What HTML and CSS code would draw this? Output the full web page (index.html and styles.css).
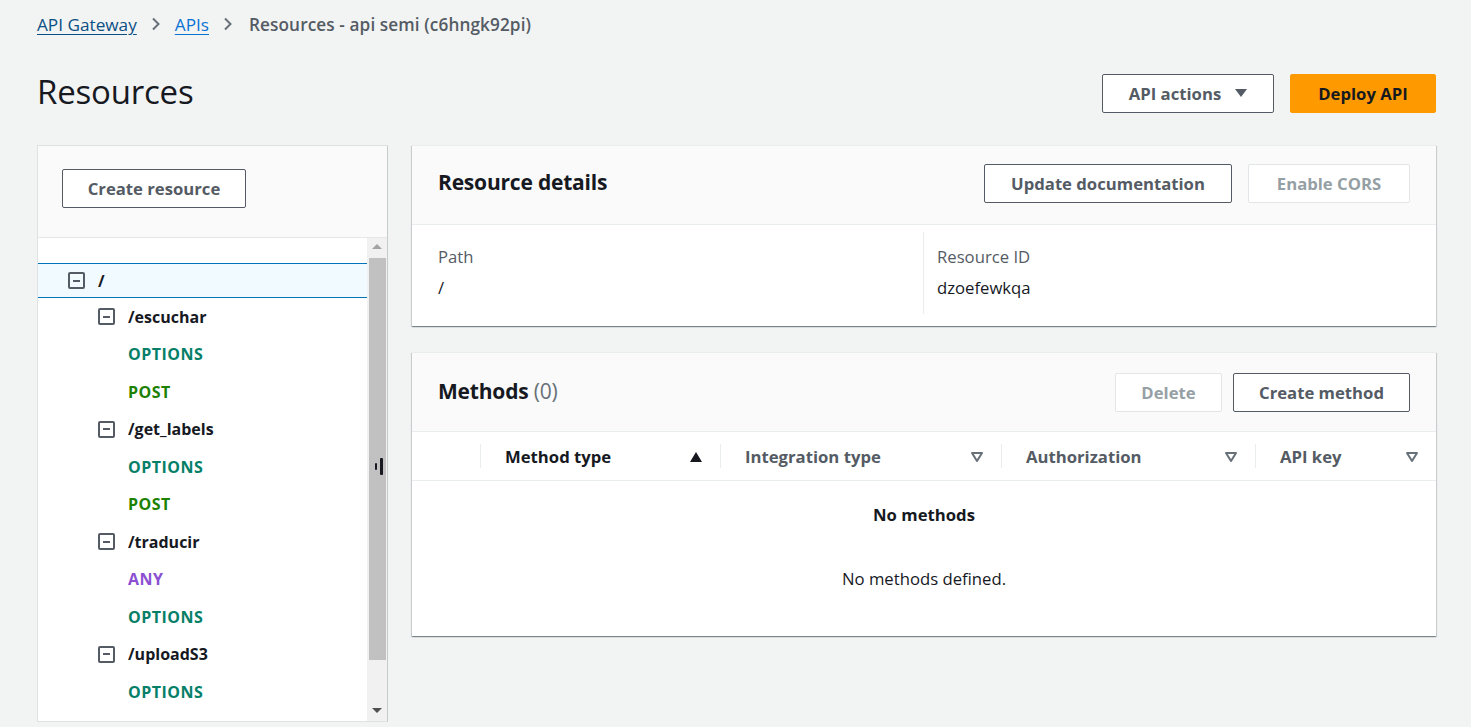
FILE: index.html
```html
<!DOCTYPE html>
<html lang="en">
<head>
<meta charset="utf-8">
<title>Resources - API Gateway</title>
<link rel="stylesheet" href="styles.css">
</head>
<body>
<div class="page">
  <nav class="crumbs">
    <a class="crumb crumb-visited" href="#">API Gateway</a>
    <svg class="chev" width="10" height="14" viewBox="0 0 10 14"><path d="M2 1.5 L7.5 7 L2 12.5" fill="none" stroke="#687078" stroke-width="2"/></svg>
    <a class="crumb" href="#">APIs</a>
    <svg class="chev" width="10" height="14" viewBox="0 0 10 14"><path d="M2 1.5 L7.5 7 L2 12.5" fill="none" stroke="#687078" stroke-width="2"/></svg>
    <span class="crumb-current">Resources - api semi (c6hngk92pi)</span>
  </nav>

  <header class="page-head">
    <h1 class="title">Resources</h1>
    <div class="head-actions">
      <button class="btn btn-normal btn-actions">API actions
        <svg width="12" height="10" viewBox="0 0 12 10"><path d="M0 1 H12 L6 9 Z" fill="#545b64"/></svg>
      </button>
      <button class="btn btn-primary">Deploy API</button>
    </div>
  </header>

  <main class="layout">
    <aside class="tree-panel">
      <div class="tree-head">
        <button class="btn btn-normal btn-create">Create resource</button>
      </div>
      <div class="tree-body">
        <div class="tree-list">
          <div class="row row-selected lvl0">
            <span class="minus"></span><span class="res">/</span>
          </div>
          <div class="row lvl1"><span class="minus"></span><span class="res">/escuchar</span></div>
          <div class="row lvl2"><span class="m m-options">OPTIONS</span></div>
          <div class="row lvl2"><span class="m m-post">POST</span></div>
          <div class="row lvl1"><span class="minus"></span><span class="res">/get_labels</span></div>
          <div class="row lvl2"><span class="m m-options">OPTIONS</span></div>
          <div class="row lvl2"><span class="m m-post">POST</span></div>
          <div class="row lvl1"><span class="minus"></span><span class="res">/traducir</span></div>
          <div class="row lvl2"><span class="m m-any">ANY</span></div>
          <div class="row lvl2"><span class="m m-options">OPTIONS</span></div>
          <div class="row lvl1"><span class="minus"></span><span class="res">/uploadS3</span></div>
          <div class="row lvl2"><span class="m m-options">OPTIONS</span></div>
        </div>
        <div class="scrollbar">
          <span class="sb-up"></span>
          <span class="sb-thumb"></span>
          <span class="sb-down"></span>
        </div>
      </div>
      <span class="grip"><i class="g1"></i><i class="g2"></i></span>
    </aside>

    <section class="content">
      <div class="card">
        <div class="card-head">
          <h2 class="card-title">Resource details</h2>
          <div class="card-actions">
            <button class="btn btn-normal btn-docs">Update documentation</button>
            <button class="btn btn-disabled btn-cors">Enable CORS</button>
          </div>
        </div>
        <div class="details">
          <div class="detail-col">
            <div class="label">Path</div>
            <div class="value">/</div>
          </div>
          <div class="detail-col detail-col-right">
            <div class="label">Resource ID</div>
            <div class="value">dzoefewkqa</div>
          </div>
        </div>
      </div>

      <div class="card card-methods">
        <div class="card-head">
          <h2 class="card-title">Methods <span class="count">(0)</span></h2>
          <div class="card-actions actions-tight">
            <button class="btn btn-disabled btn-delete">Delete</button>
            <button class="btn btn-normal btn-method">Create method</button>
          </div>
        </div>
        <div class="thead">
          <div class="th th-check"></div>
          <div class="th th-type sorted"><span>Method type</span>
            <svg width="14" height="12" viewBox="0 0 14 12"><path d="M7 1 L13 11 H1 Z" fill="#16191f"/></svg>
          </div>
          <div class="th th-int"><span>Integration type</span>
            <svg width="14" height="12" viewBox="0 0 14 12"><path d="M2 2 H12 L7 10 Z" fill="none" stroke="#687078" stroke-width="2" stroke-linejoin="round"/></svg>
          </div>
          <div class="th th-auth"><span>Authorization</span>
            <svg width="14" height="12" viewBox="0 0 14 12"><path d="M2 2 H12 L7 10 Z" fill="none" stroke="#687078" stroke-width="2" stroke-linejoin="round"/></svg>
          </div>
          <div class="th th-key"><span>API key</span>
            <svg width="14" height="12" viewBox="0 0 14 12"><path d="M2 2 H12 L7 10 Z" fill="none" stroke="#687078" stroke-width="2" stroke-linejoin="round"/></svg>
          </div>
        </div>
        <div class="empty">
          <div class="empty-title">No methods</div>
          <div class="empty-text">No methods defined.</div>
        </div>
      </div>
    </section>
  </main>
</div>
</body>
</html>
```

FILE: styles.css
```css
* { box-sizing: border-box; }

html, body {
  margin: 0;
  height: 100%;
  overflow: hidden;
}

body {
  background: #f2f3f3;
  font-family: "Open Sans", "Noto Sans", sans-serif;
  font-size: 16.7px;
  color: #16191f;
}

.page {
  padding: 0 35px 0 37px;
}

/* breadcrumbs */
.crumbs {
  display: flex;
  align-items: center;
  height: 48px;
  gap: 14px;
}

.crumb {
  color: #0972d3;
  text-decoration: underline;
  text-underline-offset: 3px;
  text-decoration-thickness: 1px;
  font-size: 17.2px;
}

.crumb-visited { color: #0b4f84; }

.chev { display: block; }

.crumb-current {
  color: #545b64;
  font-weight: 600;
  font-size: 17.2px;
  letter-spacing: 0.1px;
  margin-left: 2px;
}

/* page header */
.page-head {
  display: flex;
  align-items: center;
  justify-content: space-between;
  height: 88px;
}

.title {
  margin: 0 0 2px;
  font-size: 33px;
  font-weight: 400;
  letter-spacing: -0.2px;
}

.head-actions {
  display: flex;
  gap: 16px;
  margin-top: 2px;
}

.btn {
  font-family: inherit;
  font-size: 16.7px;
  font-weight: 700;
  height: 39px;
  border-radius: 2px;
  padding: 0 18px;
  display: inline-flex;
  align-items: center;
  justify-content: center;
  gap: 14px;
  cursor: pointer;
}

.btn-normal {
  background: #fff;
  border: 1px solid #545b64;
  color: #545b64;
}

.btn-actions { width: 172px; }

.btn-primary {
  background: #ff9900;
  border: 1px solid #ff9900;
  color: #16191f;
  width: 146px;
}

.btn-disabled {
  background: #fff;
  border: 1px solid #e3e6e8;
  color: #95a0a5;
}

/* layout */
.layout {
  display: grid;
  grid-template-columns: 351px 1fr;
  gap: 24px;
  margin-top: 9px;
  align-items: start;
}

/* tree panel */
.tree-panel {
  position: relative;
  height: 577px;
  background: #fff;
  border: 1px solid #dfe2e2;
  border-right-color: #c6cbcc;
  display: flex;
  flex-direction: column;
}

.tree-head {
  height: 92px;
  background: #fafafa;
  border-bottom: 1px solid #e6e8e8;
  padding: 23px 0 0 24px;
}

.btn-create { width: 184px; }

.tree-body {
  flex: 1;
  display: flex;
  min-height: 0;
}

.tree-list {
  flex: 1;
  padding-top: 25px;
}

.row {
  display: flex;
  align-items: center;
  height: 37.5px;
  font-weight: 700;
  font-size: 16px;
}

.row-selected {
  height: 35px;
  background: #f1faff;
  border-top: 1px solid #0073bb;
  border-bottom: 1px solid #0073bb;
}

.lvl0 { padding-left: 30px; }
.lvl1 { padding-left: 60px; }
.lvl2 { padding-left: 90px; }

.minus {
  width: 17px;
  height: 17px;
  border: 2px solid #545b64;
  border-radius: 2px;
  margin-right: 13px;
  position: relative;
  flex: none;
}

.minus::after {
  content: "";
  position: absolute;
  left: 3px;
  right: 3px;
  top: 5.5px;
  height: 2px;
  background: #545b64;
}

.res { color: #16191f; }

.m { letter-spacing: 0.5px; }
.m-options { color: #067f68; }
.m-post { color: #1d8102; }
.m-any { color: #8c4fd2; }

.scrollbar {
  width: 20px;
  background: #f1f1f1;
  display: flex;
  flex-direction: column;
  align-items: center;
  padding: 0 1px;
}

.sb-up {
  margin-top: 6px;
  width: 0;
  height: 0;
  border-left: 5px solid transparent;
  border-right: 5px solid transparent;
  border-bottom: 5px solid #a3a3a3;
}

.sb-thumb {
  margin-top: 9px;
  width: 17px;
  height: 402px;
  background: #c1c1c1;
}

.sb-down {
  margin-top: 48px;
  width: 0;
  height: 0;
  border-left: 5px solid transparent;
  border-right: 5px solid transparent;
  border-top: 5px solid #505050;
}

.grip {
  position: absolute;
  left: 336px;
  top: 312px;
  width: 10px;
  height: 18px;
}

.grip i {
  position: absolute;
  background: #16191f;
  border-radius: 1px;
}

.grip .g1 { left: 1px; top: 5px; width: 2px; height: 7px; }
.grip .g2 { left: 6px; top: 0; width: 2.5px; height: 17px; }

/* content cards */
.content {
  display: flex;
  flex-direction: column;
  gap: 26px;
}

.card {
  background: #fff;
  border-top: 1px solid #eaeded;
  box-shadow: 0 1px 1px 0 rgba(0, 28, 36, 0.35), 1px 1px 1px 0 rgba(0, 28, 36, 0.12), -1px 1px 1px 0 rgba(0, 28, 36, 0.12);
}

.card-head {
  height: 79px;
  background: #fafafa;
  border-bottom: 1px solid #eaeded;
  display: flex;
  align-items: center;
  justify-content: space-between;
  padding: 0 26px 3px;
}

.card-title {
  margin: 0 0 3px;
  font-size: 21px;
  font-weight: 700;
  letter-spacing: -0.2px;
}

.count {
  font-weight: 400;
  color: #687078;
}

.card-actions {
  display: flex;
  gap: 16px;
}

.actions-tight { gap: 11px; }

.btn-docs { width: 248px; }
.btn-cors { width: 162px; }
.btn-delete { width: 107px; }
.btn-method { width: 177px; }

.card-methods .card-head { padding-bottom: 0; }

.details {
  display: grid;
  grid-template-columns: 512px 1fr;
  padding: 7px 0 12px;
}

.detail-col {
  padding: 14px 26px 15px;
  border-right: 1px solid #eaeded;
}

.detail-col-right {
  border-right: none;
  padding-left: 13px;
}

.label {
  color: #545b64;
  line-height: 22px;
}

.value {
  margin-top: 9px;
  line-height: 22px;
}

/* table */
.thead {
  display: grid;
  grid-template-columns: 68px 240px 281px 254px 1fr;
  height: 49px;
  border-bottom: 1px solid #eaeded;
  align-items: center;
}

.th {
  position: relative;
  display: flex;
  align-items: center;
  justify-content: space-between;
  padding: 1px 17px 0 25px;
  font-weight: 700;
  color: #545b64;
  height: 100%;
}

.th::before {
  content: "";
  position: absolute;
  left: 0;
  top: 12px;
  bottom: 12px;
  width: 1px;
  background: #eaeded;
}

.th-check::before { display: none; }

.sorted { color: #16191f; }

.empty {
  height: 155px;
  text-align: center;
  padding-top: 23px;
}

.empty-title {
  font-weight: 700;
  line-height: 22px;
}

.empty-text {
  margin-top: 42px;
  line-height: 22px;
}
```
